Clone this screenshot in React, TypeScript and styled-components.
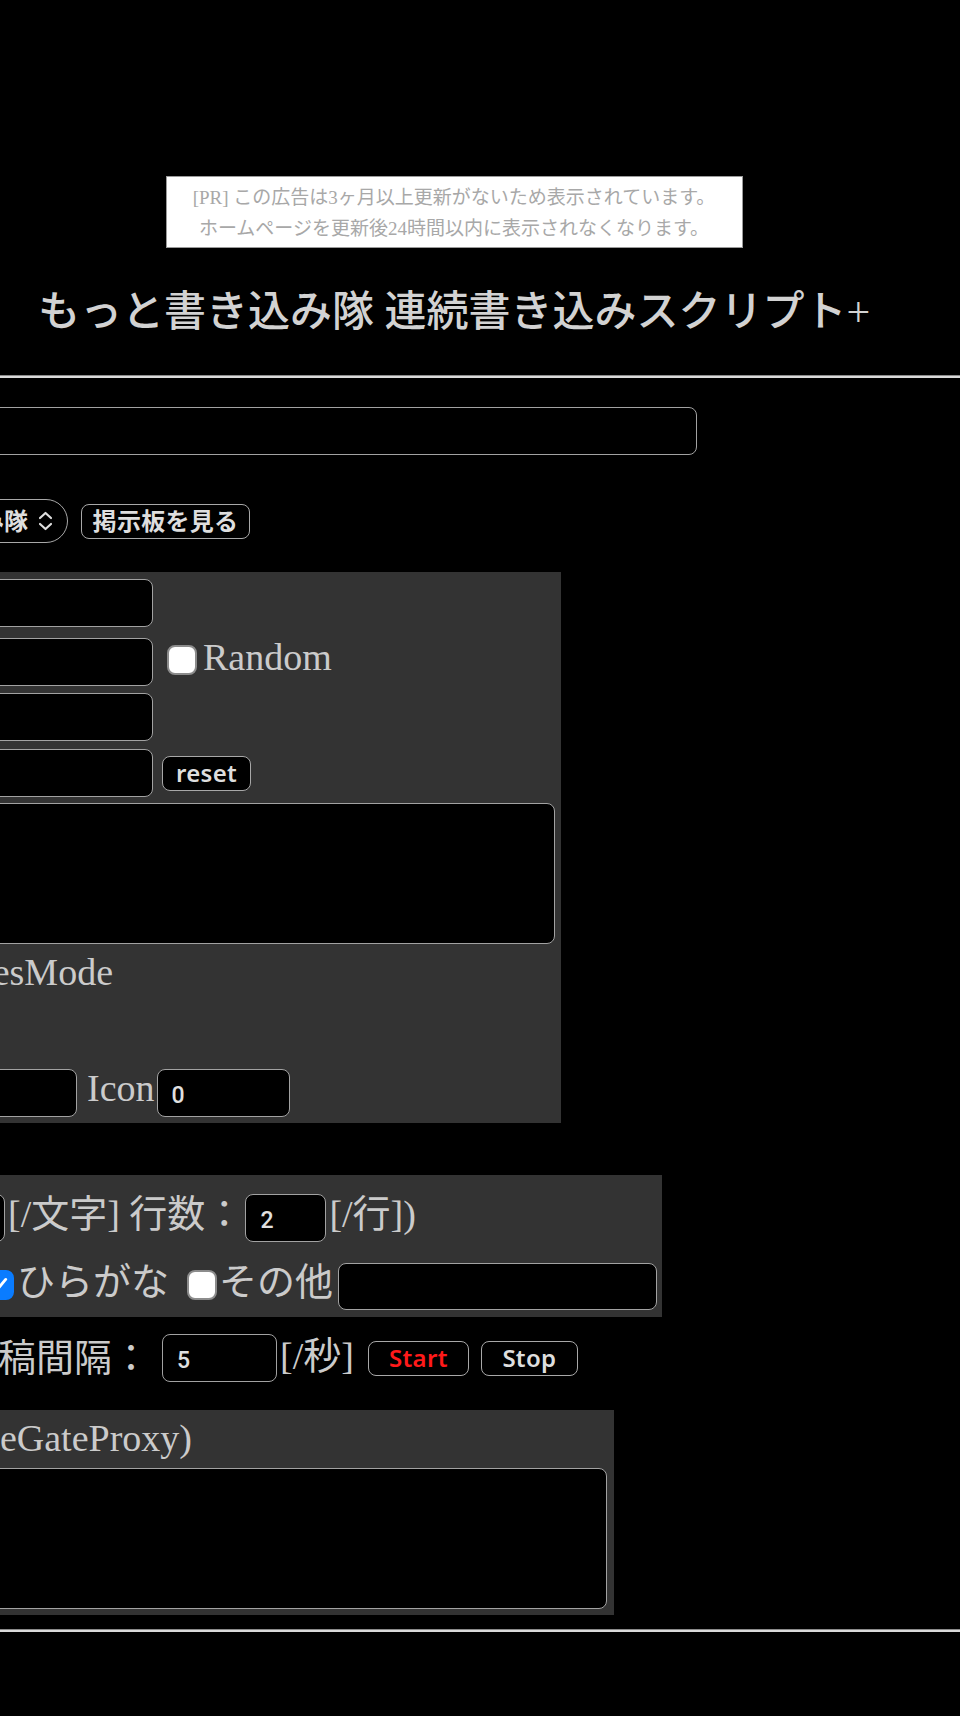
import React from 'react';
import styled, { createGlobalStyle } from 'styled-components';

const GlobalStyle = createGlobalStyle`
	html, body {
		margin: 0;
		padding: 0;
		background: #000;
		overflow: hidden;
	}
	body {
		font-family: 'Liberation Serif', 'Noto Sans CJK JP', serif;
		color: #cbcbcb;
	}
`;

// the page is scrolled a little to the right, so its left edge is cut off
const Page = styled.div`
	margin-left: -52px;
	width: 1012px;
	min-height: 1716px;
	box-sizing: border-box;
	padding: 176px 8px 0 8px;
	display: flex;
	flex-direction: column;
	align-items: flex-start;
`;

const AdBox = styled.div`
	align-self: center;
	width: 577px;
	height: 72px;
	box-sizing: border-box;
	padding: 5px 0;
	background: #fff;
	border: 1px solid #9a9a9a;
	color: #a8a8a8;
	font-size: 19px;
	line-height: 31px;
	text-align: center;
	white-space: nowrap;
`;

const Title = styled.h1`
	align-self: stretch;
	margin: 39px 0 0 0;
	font-size: 42px;
	line-height: 50px;
	font-weight: 500;
	color: #d2d2d2;
	text-align: center;
	white-space: nowrap;
`;

const Rule = styled.hr<{ $mt: number }>`
	align-self: stretch;
	margin: ${(p) => p.$mt}px -8px 0 -8px;
	height: 0;
	border: none;
	border-top: 1px solid #8a8a8a;
	border-bottom: 2px solid #dadada;
`;

const Line = styled.div<{ $mt?: number; $h?: number }>`
	display: flex;
	align-items: center;
	margin-top: ${(p) => p.$mt ?? 0}px;
	height: ${(p) => p.$h ?? 48}px;
	font-size: 38px;
	line-height: 44px;
	white-space: nowrap;
`;

const Panel = styled.div<{ $w: number; $mt: number; $pt: number; $pb: number }>`
	width: ${(p) => p.$w}px;
	margin-top: ${(p) => p.$mt}px;
	padding: ${(p) => p.$pt}px 0 ${(p) => p.$pb}px 0;
	box-sizing: border-box;
	background: #333;
	display: flex;
	flex-direction: column;
	align-items: flex-start;
`;

// text whose start is scrolled off to the left: right aligned in a fixed box
const EdgeLabel = styled.span<{ $w: number }>`
	display: flex;
	justify-content: flex-end;
	align-items: center;
	width: ${(p) => p.$w}px;
	flex: none;
	white-space: nowrap;
`;

const Text = styled.span<{ $ml?: number; $up?: number }>`
	margin-left: ${(p) => p.$ml ?? 0}px;
	margin-bottom: ${(p) => (p.$up ?? 0) * 2}px;
`;

const Field = styled.input<{ $w: number; $h?: number; $ml?: number }>`
	flex: none;
	width: ${(p) => p.$w}px;
	height: ${(p) => p.$h ?? 48}px;
	margin: 0 0 0 ${(p) => p.$ml ?? 0}px;
	box-sizing: border-box;
	padding: 4px 14px 0 14px;
	background: #000;
	border: 1.5px solid #a2a2a2;
	border-radius: 8px;
	color: #e0e0e0;
	font-family: Roboto, 'Noto Sans', sans-serif;
	font-size: 23px;
	font-weight: 500;
	outline: none;
`;

const Area = styled.textarea<{ $w: number; $h: number; $mt: number }>`
	width: ${(p) => p.$w}px;
	height: ${(p) => p.$h}px;
	margin: ${(p) => p.$mt}px 0 0 0;
	box-sizing: border-box;
	background: #000;
	border: 1.5px solid #a2a2a2;
	border-radius: 8px;
	resize: none;
	outline: none;
`;

const Button = styled.button<{ $w: number; $ml?: number; $red?: boolean }>`
	flex: none;
	width: ${(p) => p.$w}px;
	height: 35px;
	margin-left: ${(p) => p.$ml ?? 0}px;
	padding: 0;
	display: flex;
	align-items: center;
	justify-content: center;
	background: #000;
	border: 1.5px solid #a8a8a8;
	border-radius: 8px;
	color: ${(p) => (p.$red ? '#ff1a1a' : '#dedede')};
	font-family: 'Noto Sans', 'Noto Sans CJK JP', sans-serif;
	font-size: 24px;
	font-weight: 600;
	letter-spacing: 0.3px;
	line-height: 1;
`;

const SelectBox = styled.div`
	flex: none;
	width: 112px;
	height: 44px;
	box-sizing: border-box;
	padding-right: 13px;
	display: flex;
	justify-content: flex-end;
	align-items: center;
	overflow: hidden;
	border: 1.5px solid #a8a8a8;
	border-radius: 22px;
	color: #dedede;
	font-family: 'Noto Sans', 'Noto Sans CJK JP', sans-serif;
	font-size: 24px;
	font-weight: 600;
	white-space: nowrap;
`;

const Chevrons = styled.svg`
	flex: none;
	margin-left: 9px;
`;

const Box = styled.span<{ $on?: boolean; $ml?: number; $mr?: number }>`
	flex: none;
	display: flex;
	align-items: center;
	justify-content: center;
	width: 30px;
	height: 30px;
	box-sizing: border-box;
	margin: 0 ${(p) => p.$mr ?? 0}px 4px ${(p) => p.$ml ?? 0}px;
	border-radius: 8px;
	border: 2.5px solid ${(p) => (p.$on ? '#0a7cff' : '#8c8c8c')};
	background: ${(p) => (p.$on ? '#0a7cff' : '#fff')};
`;

function CheckBox({ on, ml, mr }: { on?: boolean; ml?: number; mr?: number }) {
	return (
		<Box $on={on} $ml={ml} $mr={mr}>
			{on && (
				<svg width='20' height='20' viewBox='0 0 18 18'>
					<polyline points='3,9.5 7,13.5 15,4' fill='none' stroke='#fff' strokeWidth='2.6' strokeLinecap='round' strokeLinejoin='round' />
				</svg>
			)}
		</Box>
	);
}

export default function App() {
	return (
		<>
			<GlobalStyle />
			<Page>
				<AdBox>
					[PR] この広告は3ヶ月以上更新がないため表示されています。
					<br />
					ホームページを更新後24時間以内に表示されなくなります。
				</AdBox>

				<Title>もっと書き込み隊 連続書き込みスクリプト+</Title>

				<Rule $mt={38} />

				<Field $w={741} style={{ marginTop: 29 }} />

				<Line $mt={44} $h={44}>
					<SelectBox>
						もっと書き込み隊
						<Chevrons width='17' height='22' viewBox='0 0 17 22'>
							<polyline points='3,8 8.5,3 14,8' fill='none' stroke='#dedede' strokeWidth='2.2' strokeLinecap='round' strokeLinejoin='round' />
							<polyline points='3,14 8.5,19 14,14' fill='none' stroke='#dedede' strokeWidth='2.2' strokeLinecap='round' strokeLinejoin='round' />
						</Chevrons>
					</SelectBox>
					<Button $w={169} $ml={13}>掲示板を見る</Button>
				</Line>

				{/* name / mail / etc */}
				<Panel $w={605} $mt={29} $pt={7} $pb={6}>
					<Line>
						<Field $w={197} />
					</Line>
					<Line $mt={11}>
						<Field $w={197} />
						<CheckBox ml={14} mr={6} />
						<Text $up={5}>Random</Text>
					</Line>
					<Line $mt={7}>
						<Field $w={197} />
					</Line>
					<Line $mt={8}>
						<Field $w={197} />
						<Button $w={89} $ml={9}>reset</Button>
					</Line>
					<Area $w={599} $h={141} $mt={6} />
					<Line $mt={6} $h={44}>
						<EdgeLabel $w={157}>ResMode</EdgeLabel>
					</Line>
					<Line $mt={75}>
						<Field $w={121} />
						<Text $ml={10} $up={5}>Icon</Text>
						<Field $w={133} $ml={2} defaultValue='0' />
					</Line>
				</Panel>

				{/* random text settings */}
				<Panel $w={706} $mt={52} $pt={19} $pb={7}>
					<Line>
						<Field $w={49} />
						<Text $ml={3} $up={4}>[/文字] 行数：</Text>
						<Field $w={81} $ml={2} defaultValue='2' />
						<Text $ml={3} $up={4}>[/行])</Text>
					</Line>
					<Line $mt={21} $h={47}>
						<EdgeLabel $w={58}>
							カタカナ
							<CheckBox on />
						</EdgeLabel>
						<Text $ml={3} $up={5}>ひらがな</Text>
						<CheckBox ml={18} mr={2} />
						<Text $up={5}>その他</Text>
						<Field $w={319} $h={47} $ml={5} />
					</Line>
				</Panel>

				<Line $mt={17}>
					<EdgeLabel $w={194}>投稿間隔：</EdgeLabel>
					<Field $w={115} $ml={12} defaultValue='5' />
					<Text $ml={3} $up={2}>[/秒]</Text>
					<Button $w={101} $ml={14} $red>Start</Button>
					<Button $w={97} $ml={12}>Stop</Button>
				</Line>

				{/* proxy list */}
				<Panel $w={658} $mt={28} $pt={6} $pb={6}>
					<Line $h={44}>
						<EdgeLabel $w={236}>プロキシ(UseGateProxy)</EdgeLabel>
					</Line>
					<Area $w={651} $h={141} $mt={8} />
				</Panel>

				<Rule $mt={14} />
			</Page>
		</>
	);
}
